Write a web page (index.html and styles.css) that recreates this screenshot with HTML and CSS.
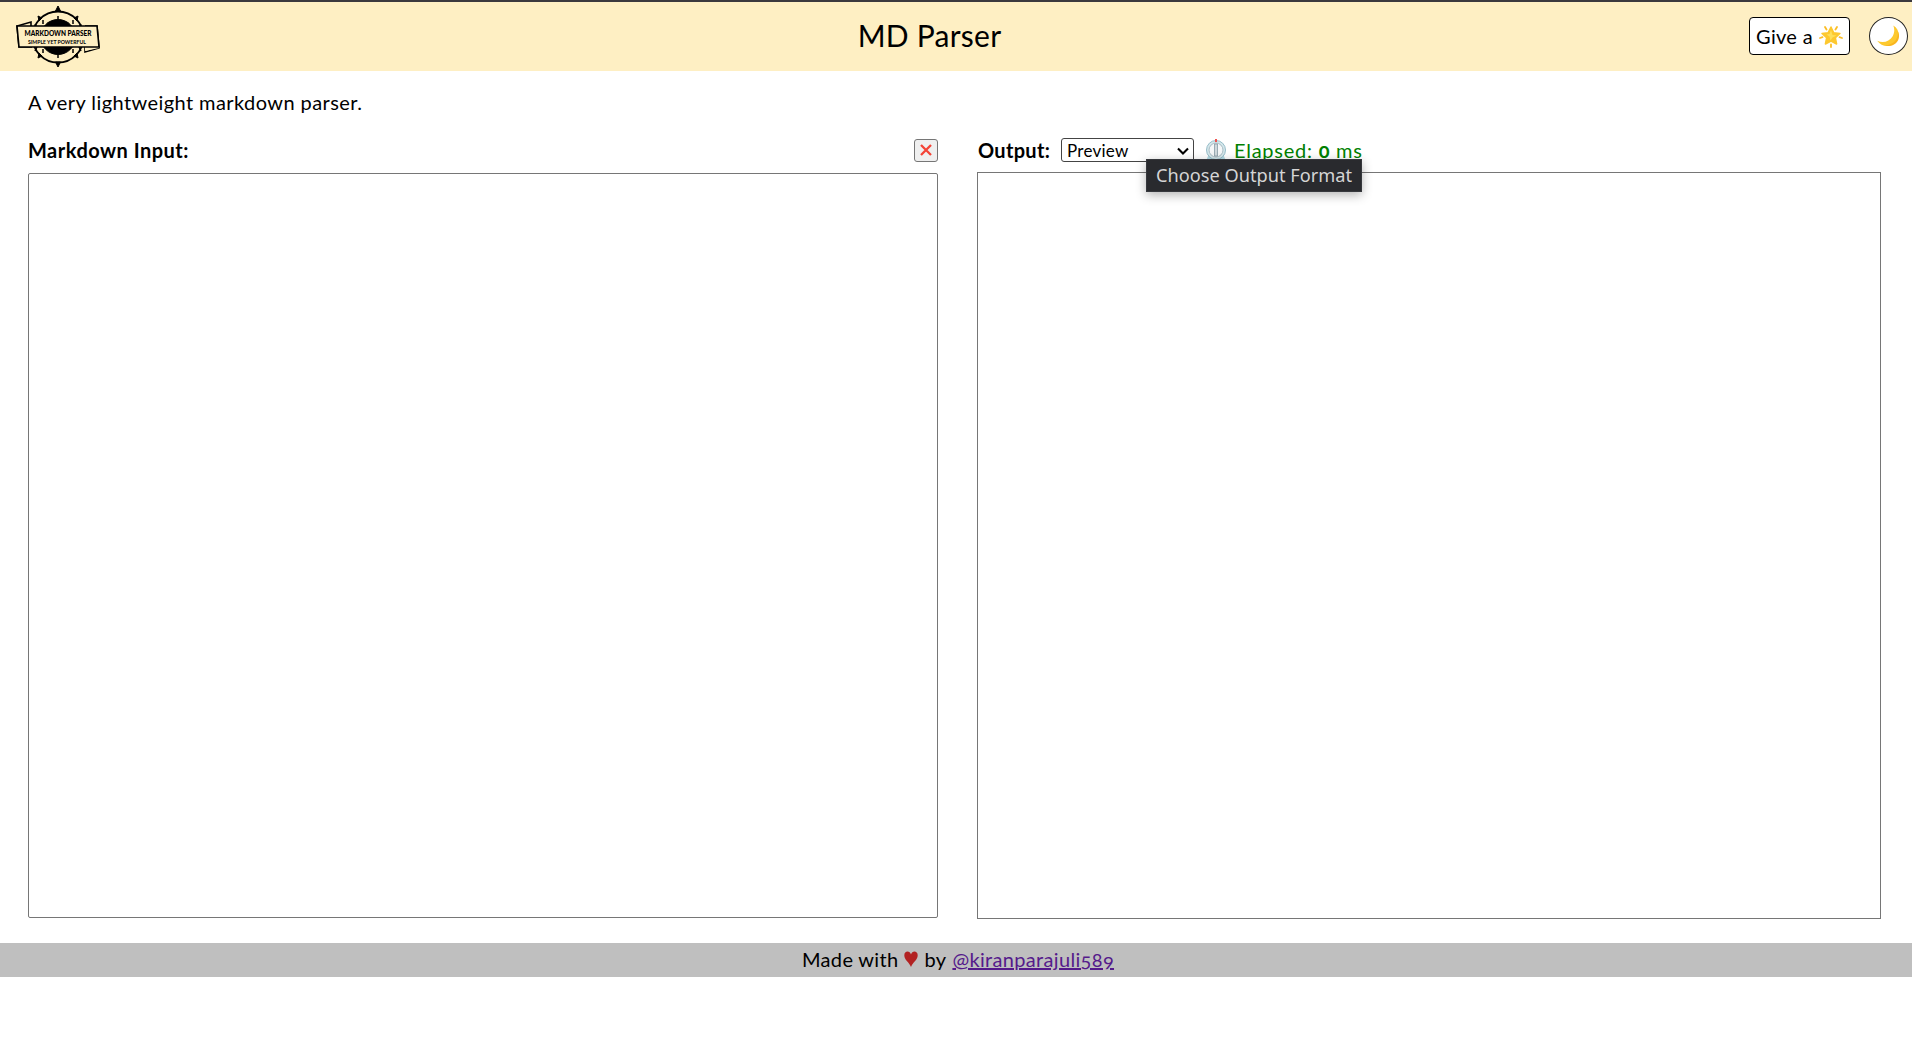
FILE: index.html
```html
<!DOCTYPE html>
<html lang="en">
<head>
<meta charset="utf-8">
<title>MD Parser</title>
<link rel="stylesheet" href="styles.css">
</head>
<body>
<header class="header">
  <svg class="logo" viewBox="0 0 84 62" fill="none" stroke="#000">
    <circle cx="42" cy="31" r="25.5" stroke-width="1.8"/>
    <path d="M42 0l-2.500 5h5zM42 61l-2.500-5h5zM22 10l1 5 3-3zM62 10l-1 5-3-3zM22 52l1-5 3 3zM62 52l-1-5-3 3z" fill="#000" stroke-width="1"/>
    <circle cx="42" cy="31" r="17.500" fill="#000"/>
    <path d="M21 22l-2-4M63 22l2-4M21 41l-2 4M63 41l2 4M27 18v-4M57 18v-4M27 43v4M57 43v4M42 13v-3M42 49v3" stroke-width="1.500"/>
    <path d="M15 20L15 16L1 20L3 41H16M69 41V46L83 42L81 20H69" stroke-width="1.600"/>
    <path d="M1 20H81L83 42L69 45V41H3Z" fill="#feefc3" stroke="none"/>
    <path d="M1 20H81L83 41H3Z" fill="#feefc3" stroke-width="1.600"/>
    <text class="logo-name" x="8.500" y="30" textLength="67" lengthAdjust="spacingAndGlyphs">MARKDOWN PARSER</text>
    <text class="logo-tag" x="12" y="38" textLength="58" lengthAdjust="spacingAndGlyphs">SIMPLE YET POWERFUL</text>
  </svg>
  <h1 class="title">MD Parser</h1>
  <div class="actions">
    <button class="star-button"><span>Give a</span>
      <svg width="24" height="24" viewBox="0 0 24 24"><path d="M12 3l2.700 5.700 6.200.8-4.500 4.300 1.200 6.200L12 17l-5.600 3 1.200-6.200L3 9.500l6.200-.8z" fill="#fdc82f" stroke="#fdc82f" stroke-width="1.500" stroke-linejoin="round"/><path d="M12 6l1.500 5 4 .5-4 2-2 3-1-4-3-2 3-.5z" fill="#ffdf5a"/><path d="M6 3l1.500 2.500M18 3l-1.500 2.500M1 14l2.500-.8M23 14l-2.500-.8M12 20.500V23" stroke="#fbbd25" stroke-width="1.800" stroke-linecap="round"/></svg>
    </button>
    <button class="theme-button" aria-label="Dark mode">
      <svg width="24" height="24" viewBox="0 0 24 24"><path d="M17.300 1.500C23 5 24.500 12 20.500 17.500 16 23.500 6 24 1.200 16.800c6 2.700 12.300.7 15.300-4.300 2.200-3.700 2.200-7.500.8-11z" fill="#fdc92f"/><path d="M21.800 7.500c1 7-4 13.500-13 13.800 7 2.500 14-2 14.200-9 0-2-.4-3.400-1.200-4.800z" fill="#f9b51e"/></svg>
    </button>
  </div>
</header>
<main class="main">
  <p class="intro">A very lightweight markdown parser.</p>
  <div class="panes">
    <section class="pane pane-input">
      <div class="bar"><label class="label label-input" for="source">Markdown Input:</label>
        <button class="clear" aria-label="Clear"><svg width="12" height="12" viewBox="0 0 12 12"><path d="M1 1l10 10M11 1L1 11" stroke="#f44336" stroke-width="2.300"/></svg></button>
      </div>
      <textarea class="source" id="source"></textarea>
    </section>
    <section class="pane pane-output">
      <div class="bar">
        <span class="label label-output">Output:</span>
        <div class="format">
          <select class="select"><option>Preview</option></select>
          <svg class="chevron" width="12" height="8" viewBox="0 0 12 8"><path d="M1 1.500l5 5 5-5" fill="none" stroke="#000" stroke-width="2.100"/></svg>
          <div class="tooltip">Choose Output Format</div>
        </div>
        <svg class="timer" width="22" height="22" viewBox="0 0 22 22"><path d="M3 17L1 22h20l-2-5z" fill="#b5dce6"/><circle cx="11" cy="11" r="9.500" fill="#d5e7eb" stroke="#96bdc9"/><circle cx="11" cy="11" r="7" fill="#f5f7f8" stroke="#a8bcc4"/><path d="M9.500 5h3v12h-3z" fill="#cfd8dc" stroke="#879ba4" stroke-width=".8"/><path d="M11 0v3" stroke="#ef5350" stroke-width="2"/></svg>
        <span class="elapsed">Elapsed: <b>0</b> ms</span>
      </div>
      <div class="output"></div>
    </section>
  </div>
</main>
<footer class="footer"><span>Made with</span><svg class="heart" width="14" height="16" viewBox="0 0 14 16"><path d="M7 16C5.500 11.500.3 9 .3 4.200.3-.5 6-.8 7 3.500 8-.8 13.700-.5 13.700 4.200 13.700 9 8.500 11.500 7 16z" fill="#b22222"/></svg><span>by</span><a class="author" href="#">@kiranparajuli589</a></footer>
</body>
</html>
```
FILE: styles.css
```css
* { box-sizing: border-box; }
body { margin: 0; background: #fff; color: #000; font: 20px/24px Lato, "Open Sans", sans-serif; font-variant-numeric: oldstyle-nums; }
button, select, textarea { font: inherit; color: inherit; margin: 0; }
.header { height: 71px; border-top: 2px solid #3b393d; background: #feefc3; display: flex; align-items: center; justify-content: space-between; padding: 0 4px 0 16px; }
.logo { width: 84px; height: 62px; margin-top: 1px; overflow: visible; }
.logo-name { font: 900 7.500px Lato, sans-serif; fill: #000; stroke: none; }
.logo-tag { font: 700 5px Lato, sans-serif; fill: #000; stroke: none; }
.title { margin: 0 0 4px 10px; font-size: 30px; font-weight: 400; line-height: 36px; letter-spacing: .25px; }
.actions { display: flex; gap: 19px; margin-bottom: 1px; }
.star-button { width: 101px; height: 38px; padding: 0; display: flex; align-items: center; justify-content: center; gap: 6px; border: 1px solid #000; border-radius: 4px; background: #fff; letter-spacing: .3px; }
.star-button span { padding-bottom: 1px; }
.theme-button { width: 39px; height: 38px; padding: 0; display: flex; align-items: center; justify-content: center; border: 1px solid #222; border-radius: 50%; background: #fff; }
.main { padding: 19px 31px 24px 28px; }
.intro { margin: 0 0 24px; letter-spacing: .42px; }
.panes { display: flex; gap: 39px; }
.pane-input { width: 910px; }
.pane-output { width: 904px; }
.bar { height: 24px; display: flex; align-items: center; }
.label { font-weight: 700; }
.label-input { letter-spacing: .48px; flex: 1; }
.label-output { width: 84px; padding-left: 1px; letter-spacing: .3px; }
.clear { width: 24px; height: 23px; padding: 0; display: flex; align-items: center; justify-content: center; border: 1px solid #767676; border-radius: 3px; background: #efefef; }
.source { display: block; width: 100%; height: 745px; margin-top: 11px; border: 1px solid #767676; border-radius: 2px; background: #fff; resize: none; }
.output { height: 747px; margin-top: 10px; border: 1px solid #767676; }
.format { position: relative; width: 133px; height: 24px; }
.select { display: block; appearance: none; width: 100%; height: 24px; padding: 0 5px; border: 1px solid #444; border-radius: 3px; background: #fff; font-size: 17px; line-height: 21px; letter-spacing: .25px; }
.chevron { position: absolute; right: 5px; top: 9px; }
.tooltip { position: absolute; z-index: 1; left: 85px; top: 21px; width: 216px; height: 33px; border: 1px solid #36383d; background: #292a2e; color: #d5d5d5; font: 18.200px/30px "Noto Sans", sans-serif; text-align: center; white-space: nowrap; box-shadow: 0 3px 10px rgba(0,0,0,.3); }
.timer { margin-left: 11px; }
.elapsed { margin-left: 7px; color: #008000; letter-spacing: .75px; }
.footer { height: 34px; background: #bfbfbf; display: flex; align-items: center; justify-content: center; padding: 0 0 2px 4px; gap: 6px; letter-spacing: .33px; }
.author { color: #551a8b; }
```
